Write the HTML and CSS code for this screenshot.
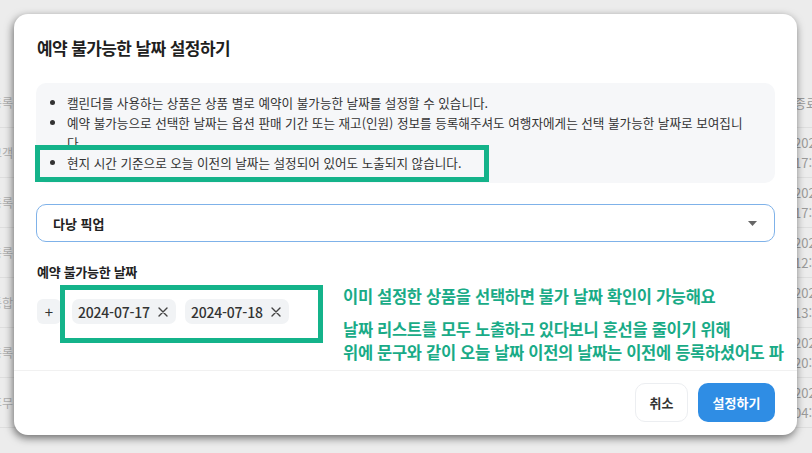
FILE: index.html
```html
<!DOCTYPE html>
<html lang="ko">

<head>
  <meta charset="UTF-8">
  <meta name="viewport" content="width=device-width, initial-scale=1.0">
  <title>예약 불가능한 날짜 설정하기</title>
  <link rel="stylesheet" href="styles.css">
</head>

<body>
  <!-- page behind the modal -->
  <div class="page">
    <div class="row head"><span class="cell-left">등록</span><span class="cell-right">종료</span></div>
    <div class="row"><span class="cell-left">고객</span><span class="cell-right">2024<br>17:20</span></div>
    <div class="row"><span class="cell-left">등록</span><span class="cell-right">2024<br>17:05</span></div>
    <div class="row"><span class="cell-left">등록</span><span class="cell-right">2024<br>12:40</span></div>
    <div class="row"><span class="cell-left">통합</span><span class="cell-right">2024<br>13:10</span></div>
    <div class="row"><span class="cell-left">등록</span><span class="cell-right">2024<br>20:00</span></div>
    <div class="row"><span class="cell-left">휴무</span><span class="cell-right">2024<br>04:30</span></div>
  </div>

  <div class="modal">
    <h2 class="modal-title">예약 불가능한 날짜 설정하기</h2>

    <ul class="notice">
      <li>캘린더를 사용하는 상품은 상품 별로 예약이 불가능한 날짜를 설정할 수 있습니다.</li>
      <li>예약 불가능으로 선택한 날짜는 옵션 판매 기간 또는 재고(인원) 정보를 등록해주셔도 여행자에게는 선택 불가능한 날짜로 보여집니다.</li>
      <li>현지 시간 기준으로 오늘 이전의 날짜는 설정되어 있어도 노출되지 않습니다.</li>
    </ul>

    <div class="select">
      <span>다낭 픽업</span>
      <svg width="9" height="5" viewBox="0 0 9 5"><path d="M0 0h9L4.5 5z" fill="#666"/></svg>
    </div>

    <div class="field-label">예약 불가능한 날짜</div>
    <div class="tags">
      <button class="tag-add">+</button>
      <span class="tag">2024-07-17
        <svg width="10" height="10" viewBox="0 0 10 10"><path d="M1 1l8 8M9 1l-8 8" stroke="#444" stroke-width="1.4" stroke-linecap="round"/></svg>
      </span>
      <span class="tag">2024-07-18
        <svg width="10" height="10" viewBox="0 0 10 10"><path d="M1 1l8 8M9 1l-8 8" stroke="#444" stroke-width="1.4" stroke-linecap="round"/></svg>
      </span>
    </div>

    <div class="modal-footer">
      <button class="btn btn-cancel">취소</button>
      <button class="btn btn-primary">설정하기</button>
    </div>
  </div>

  <!-- review notes drawn over the screenshot -->
  <div class="mark mark-notice"></div>
  <div class="mark mark-tags"></div>
  <div class="memo memo-top">이미 설정한 상품을 선택하면 불가 날짜 확인이 가능해요</div>
  <div class="memo memo-bottom">날짜 리스트를 모두 노출하고 있다보니 혼선을 줄이기 위해<br>위에 문구와 같이 오늘 날짜 이전의 날짜는 이전에 등록하셨어도 파</div>
</body>

</html>
```

FILE: styles.css
```css
* {
  box-sizing: border-box;
}

body {
  margin: 0;
  width: 812px;
  height: 453px;
  overflow: hidden;
  position: relative;
  font-family: "Noto Sans CJK KR", "Noto Sans", sans-serif;
  background-color: #ececec;
}

.page {
  height: 100%;
  padding-top: 78px;
}

.row {
  display: flex;
  justify-content: space-between;
  align-items: center;
  height: 50px;
  border-bottom: 1px solid #dedede;
}

.cell-left {
  margin-left: -9px;
  font-size: 12px;
  color: #b0b0b0;
}

.cell-right {
  width: 18px;
  overflow: hidden;
  white-space: nowrap;
  font-size: 13px;
  line-height: 20px;
  color: #9a9a9a;
}

.modal {
  position: absolute;
  left: 14px;
  top: 14px;
  width: 783px;
  height: 421px;
  display: flex;
  flex-direction: column;
  background-color: #fff;
  border-radius: 14px;
  box-shadow: -1px 3px 9px rgba(0, 0, 0, 0.55);
}

.modal-title {
  margin: 0;
  padding: 22px 23px 0;
  font-size: 17px;
  line-height: 24px;
  font-weight: 700;
  letter-spacing: -0.6px;
  color: #1f1f1f;
}

.notice {
  margin: 23px 22px 0;
  padding: 10px 24px 10px 31px;
  background-color: #f6f7f9;
  border-radius: 10px;
  font-size: 12.6px;
  line-height: 20px;
  color: #333;
}

.select {
  display: flex;
  justify-content: space-between;
  align-items: center;
  height: 38px;
  margin: 21px 22px 0;
  padding: 0 17px 0 16px;
  border: 1px solid #7fb2e9;
  border-radius: 10px;
  font-size: 13px;
  font-weight: 700;
  color: #222;
}

.field-label {
  margin: 20px 23px 0;
  font-size: 13px;
  line-height: 20px;
  font-weight: 700;
  letter-spacing: -0.3px;
  color: #222;
}

.tags {
  display: flex;
  align-items: center;
  gap: 9px;
  margin-top: 17px;
  padding: 0 23px;
}

.tag-add {
  width: 24px;
  height: 25px;
  margin-right: 2px;
  padding: 0;
  border: 0;
  border-radius: 6px;
  background-color: #f1f3f5;
  font-family: inherit;
  font-size: 15px;
  color: #333;
}

.tag {
  display: flex;
  align-items: center;
  gap: 8px;
  height: 25px;
  padding: 0 8px 0 6px;
  border-radius: 7px;
  background-color: #f1f3f5;
  font-size: 14px;
  font-weight: 500;
  letter-spacing: -0.2px;
  color: #333;
}

.modal-footer {
  display: flex;
  justify-content: flex-end;
  gap: 10px;
  margin-top: auto;
  padding: 12px 22px 13px;
  border-top: 1px solid #f1f1f1;
}

.btn {
  height: 39px;
  border-radius: 10px;
  font-family: inherit;
  font-size: 13px;
  font-weight: 700;
}

.btn-cancel {
  width: 53px;
  border: 1px solid #eceef1;
  background-color: #fff;
  color: #333;
}

.btn-primary {
  width: 77px;
  border: 0;
  background-color: #2f8de4;
  color: #fff;
}

.mark {
  position: absolute;
  border: 5px solid #14b38a;
}

.mark-notice {
  left: 35px;
  top: 145px;
  width: 454px;
  height: 37px;
}

.mark-tags {
  left: 60px;
  top: 285px;
  width: 263px;
  height: 58px;
}

.memo {
  position: absolute;
  left: 343px;
  white-space: nowrap;
  font-size: 16.5px;
  line-height: 23px;
  font-weight: 700;
  letter-spacing: -0.3px;
  color: #19ab87;
}

.memo-top {
  top: 285px;
}

.memo-bottom {
  top: 318px;
}
```
